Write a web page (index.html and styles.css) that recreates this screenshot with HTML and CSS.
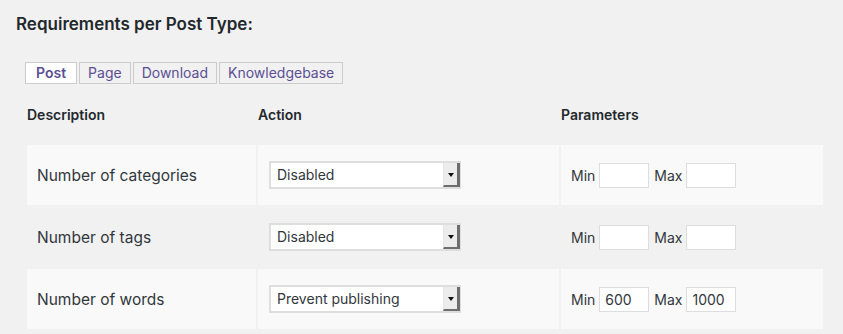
FILE: index.html
```html
<!DOCTYPE html>
<html lang="en">
<head>
  <meta charset="UTF-8">
  <title>Requirements per Post Type</title>
  <link rel="stylesheet" href="styles.css">
</head>
<body>
  <div class="wrap">
    <h2 class="title">Requirements per Post Type:</h2>

    <div class="panel">
      <div class="tabs">
        <a class="tab active" href="#">Post</a>
        <a class="tab" href="#">Page</a>
        <a class="tab" href="#">Download</a>
        <a class="tab" href="#">Knowledgebase</a>
      </div>

      <table class="reqs">
        <thead>
          <tr>
            <th class="col-desc">Description</th>
            <th class="col-action">Action</th>
            <th>Parameters</th>
          </tr>
        </thead>
        <tbody>
          <tr class="alt">
            <td class="desc">Number of categories</td>
            <td>
              <div class="select"><span class="select-text">Disabled</span><span class="select-arrow"></span></div>
            </td>
            <td>
              <div class="params">
                <span class="lbl">Min</span><input class="num" type="text" value="">
                <span class="lbl">Max</span><input class="num" type="text" value="">
              </div>
            </td>
          </tr>
          <tr>
            <td class="desc">Number of tags</td>
            <td>
              <div class="select"><span class="select-text">Disabled</span><span class="select-arrow"></span></div>
            </td>
            <td>
              <div class="params">
                <span class="lbl">Min</span><input class="num" type="text" value="">
                <span class="lbl">Max</span><input class="num" type="text" value="">
              </div>
            </td>
          </tr>
          <tr class="alt">
            <td class="desc">Number of words</td>
            <td>
              <div class="select"><span class="select-text">Prevent publishing</span><span class="select-arrow"></span></div>
            </td>
            <td>
              <div class="params">
                <span class="lbl">Min</span><input class="num" type="text" value="600">
                <span class="lbl">Max</span><input class="num" type="text" value="1000">
              </div>
            </td>
          </tr>
        </tbody>
      </table>
    </div>
  </div>
</body>
</html>
```

FILE: styles.css
```css
body {
  margin: 0;
  background: #f1f1f1;
  color: #444;
  font-family: Inter, "Liberation Sans", sans-serif;
  font-size: 14px;
}

.wrap {
  padding: 0 16px;
}

.title {
  margin: 0;
  padding-top: 14px;
  font-size: 17px;
  line-height: 20px;
  font-weight: 600;
  color: #23282d;
}

.panel {
  padding: 0 9px;
}

.tabs {
  margin-top: 28px;
  display: flex;
  gap: 2px;
}
.tab {
  display: block;
  padding: 1px 8px;
  border: 1px solid #ccc;
  font-size: 14px;
  line-height: 18px;
  color: #5b4f94;
  text-decoration: none;
}
.tab.active {
  padding: 1px 10px;
  background: #fff;
  font-weight: 600;
}

.reqs {
  width: 800px;
  border-spacing: 2px;
  color: #32373c;
}
.reqs th {
  height: 57px;
  padding: 0;
  text-align: left;
  font-weight: 600;
  color: #23282d;
}
.reqs .col-desc {
  width: 229px;
}
.reqs .col-action {
  width: 301px;
}
.reqs td {
  height: 60px;
  padding: 0 10px;
  box-sizing: border-box;
}
.reqs td.desc {
  font-size: 15.5px;
}
.reqs tr.alt td {
  background: #f9f9f9;
}

.select {
  display: flex;
  width: 192px;
  height: 28px;
  margin-left: 1px;
  box-sizing: border-box;
  border: 2px solid #dedede;
  background: #fff;
}
.select-text {
  flex: 1;
  padding-left: 6px;
  line-height: 24px;
  color: #32373c;
}
.select-arrow {
  position: relative;
  width: 13px;
  margin-right: -1px;
  background: #ececec;
  border-left: 1px solid #e4e4e4;
  border-right: 3px solid #6e6e6e;
  border-bottom: 2px solid #6e6e6e;
}
.select-arrow::after {
  content: "";
  position: absolute;
  left: 4px;
  top: 10px;
  border-left: 3px solid transparent;
  border-right: 3px solid transparent;
  border-top: 4px solid #111;
}

.params {
  display: flex;
  align-items: center;
}
.lbl {
  margin-right: 4px;
}
.num {
  width: 50px;
  height: 25px;
  margin: 0 5px 0 0;
  box-sizing: border-box;
  padding: 0 5px;
  border: 1px solid #ddd;
  background: #fff;
  font-family: inherit;
  font-size: 14px;
  color: #32373c;
  outline: none;
}
```
